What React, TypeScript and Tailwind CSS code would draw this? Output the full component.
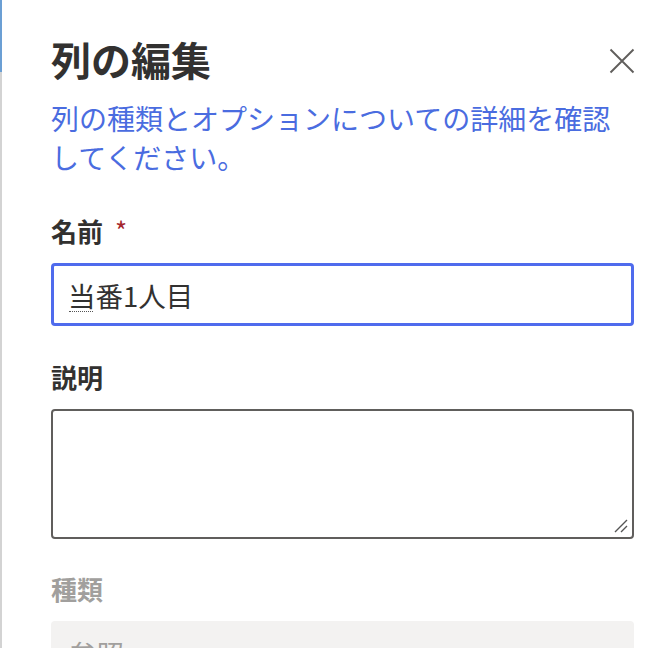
import { ChevronDown } from "lucide-react";

const font = { fontFamily: '"Noto Sans CJK JP", "Noto Sans", sans-serif' };

function CloseIcon() {
  return (
    <svg width="26" height="26" viewBox="0 0 26 26" className="text-[#605e5c]">
      <path d="M1.5 1.5 L24.5 24.5 M24.5 1.5 L1.5 24.5" stroke="currentColor" strokeWidth="1.9" fill="none" />
    </svg>
  );
}

function ResizeGrip() {
  return (
    <svg width="16" height="16" viewBox="0 0 16 16" className="absolute right-[3px] bottom-[3px] text-[#555]">
      <path d="M2 14 L14 2 M8 14 L14 8" stroke="currentColor" strokeWidth="1.4" fill="none" />
    </svg>
  );
}

export default function App() {
  return (
    <div className="flex h-[648px] w-[662px] overflow-hidden bg-white" style={font}>
      <div className="flex w-[2px] shrink-0 flex-col">
        <div className="h-[72px] bg-[#6b9fd4]" />
        <div className="flex-1 bg-[#d3d3d3]" />
      </div>

      <div className="flex flex-1 flex-col pl-[49px] pr-[28px] pt-[35px] [&>*]:shrink-0">
        <div className="flex items-center justify-between">
          <h1 className="text-[40px] font-bold leading-[48px] text-[#323130]">列の編集</h1>
          <button className="-mr-[1px] mt-[4px]">
            <CloseIcon />
          </button>
        </div>

        <p className="mt-[16px] text-[28px] leading-[39px] text-[#4a6ce0]">
          <span className="whitespace-nowrap">列の種類とオプションについての詳細を確認</span>
          <br />
          してください。
        </p>

        <label className="mt-[36px] flex items-center text-[26px] font-bold leading-[36px] text-[#323130]">
          名前
          <span className="ml-[12px] -mt-[2px] text-[26px] font-normal text-[#a4262c]">*</span>
        </label>
        <div className="relative mt-[14px] flex h-[63px] items-center rounded-[4px] border-[3px] border-[#4f6bed] px-[14px]">
          <span className="text-[27.5px] leading-[34px] text-[#323130]">当番1人目</span>
          <span className="absolute left-[15px] top-[45px] w-[24px] border-t-[1.5px] border-dotted border-[#555]" />
        </div>

        <label className="mt-[33px] text-[26px] font-bold leading-[36px] text-[#323130]">説明</label>
        <div className="relative mt-[14px] h-[130px] rounded-[4px] border-2 border-[#605e5c]">
          <ResizeGrip />
        </div>

        <label className="mt-[32px] text-[26px] font-bold leading-[36px] text-[#a19f9d]">種類</label>
        <div className="mt-[14px] flex h-[63px] items-center justify-between rounded-[4px] bg-[#f3f2f1] px-[18px]">
          <span className="text-[27.5px] leading-[34px] text-[#a19f9d]">参照</span>
          <ChevronDown className="h-[22px] w-[22px] text-[#a19f9d]" strokeWidth={1.5} />
        </div>
      </div>
    </div>
  );
}
